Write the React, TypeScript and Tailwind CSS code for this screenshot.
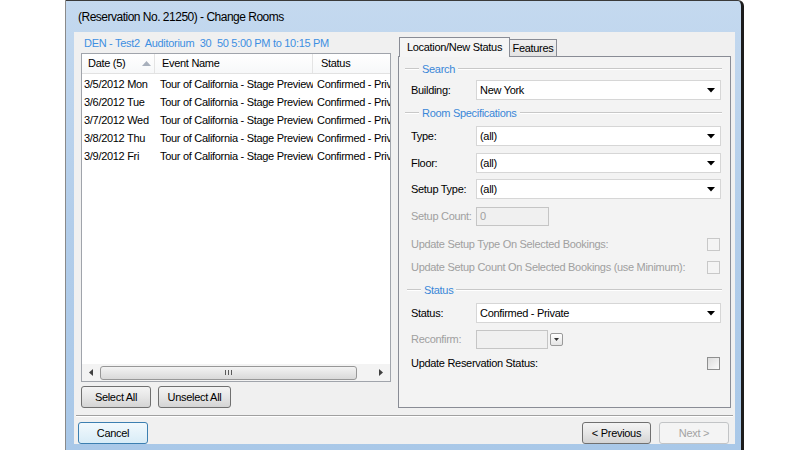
import React from 'react';

const rows = [
  ['3/5/2012 Mon', 'Tour of California - Stage Preview', 'Confirmed - Private'],
  ['3/6/2012 Tue', 'Tour of California - Stage Preview', 'Confirmed - Private'],
  ['3/7/2012 Wed', 'Tour of California - Stage Preview', 'Confirmed - Private'],
  ['3/8/2012 Thu', 'Tour of California - Stage Preview', 'Confirmed - Private'],
  ['3/9/2012 Fri', 'Tour of California - Stage Preview', 'Confirmed - Private'],
];

function Caret() {
  return (
    <svg width="8" height="5" viewBox="0 0 8 5">
      <polygon points="0,0 8,0 4,4.5" fill="#000" />
    </svg>
  );
}

function Combo({ value }: { value: string }) {
  return (
    <div className="flex h-[20px] w-[245px] items-center justify-between border border-[#d6d6d6] bg-white pl-[3px] pr-[5px]">
      <span>{value}</span>
      <Caret />
    </div>
  );
}

function GroupHeader({ title, indent = 14 }: { title: string; indent?: number }) {
  return (
    <div className="flex h-[14px] items-center gap-[3px] pr-[8px]">
      <div className="h-[2px] border-t border-b border-t-[#c8c8c8] border-b-white" style={{ width: indent }} />
      <span className="leading-[14px] text-[#3a87d8]">{title}</span>
      <div className="h-[2px] flex-1 border-t border-b border-t-[#c8c8c8] border-b-white" />
    </div>
  );
}

function Check({ disabled }: { disabled?: boolean }) {
  return (
    <div
      className={
        disabled
          ? 'h-[13px] w-[13px] border border-[#c8c8c8] bg-[#f4f4f4]'
          : 'h-[13px] w-[13px] border border-[#8e8f8f] bg-gradient-to-br from-[#dcdcdc] to-[#fbfbfb]'
      }
    />
  );
}

function WinButton({ label, w, variant = 'normal' }: { label: string; w: number; variant?: 'normal' | 'default' | 'disabled' }) {
  const cls =
    variant === 'default'
      ? 'border-[#3c7fb1] bg-gradient-to-b from-[#f2f9fd] to-[#d8ecf7] text-black'
      : variant === 'disabled'
        ? 'border-[#c2c4c6] bg-[#f4f4f4] text-[#a3a3a3]'
        : 'border-[#707070] bg-gradient-to-b from-[#f4f4f4] via-[#e6e6e6] to-[#d4d4d4] text-black';
  return (
    <div className={`flex h-[22px] items-center justify-center rounded-[3px] border ${cls}`} style={{ width: w }}>
      {label}
    </div>
  );
}

export default function App() {
  return (
    <div className="flex h-[450px] w-[812px] overflow-hidden bg-white font-['Liberation_Sans',Arial,sans-serif] text-[11px] tracking-[-0.3px] text-black">
      {/* Window frame */}
      <div className="ml-[65px] flex h-[452px] w-[679px] flex-col rounded-tr-[6px] border-t border-r-[3px] border-l border-t-[#3a3a3a] border-r-[#1c1c1c] border-l-[#8a8a8a] bg-gradient-to-b from-[#c4d9ef] via-[#b2cdea] to-[#a9c8e8] pr-[6px] pl-[8px]">
        {/* Title bar */}
        <div className="flex h-[31px] items-center pl-[4px] text-[12px] tracking-[-0.5px]">(Reservation No. 21250) - Change Rooms</div>

        {/* Content */}
        <div className="flex h-[412px] flex-col bg-[#f0f0f0]">
          <div className="flex h-[376px]">
            {/* Left column */}
            <div className="flex w-[310px] flex-col pl-[7px] box-content">
              <div className="mt-[3px] h-[16px] pl-[3px] leading-[16px] text-[#3d8fe2]">
                DEN - Test2&nbsp; Auditorium&nbsp; 30&nbsp; 50 5:00 PM to 10:15 PM
              </div>
              <div className="mt-[2px] flex h-[329px] flex-col border border-[#a0a4ab] bg-white">
                {/* Header */}
                <div className="flex h-[20px] items-center border-b border-[#e2e2e2] bg-gradient-to-b from-white to-[#f7f8f9]">
                  <div className="flex h-full w-[73px] items-center justify-between border-r border-[#e4e4e4] pl-[6px] pr-[3px]">
                    <span>Date (5)</span>
                    <svg width="9" height="5" viewBox="0 0 9 5">
                      <polygon points="0,5 9,5 4.5,0" fill="#a8b0bc" />
                    </svg>
                  </div>
                  <div className="flex h-full w-[158px] items-center border-r border-[#e4e4e4] pl-[7px]">Event Name</div>
                  <div className="flex h-full flex-1 items-center pl-[8px]">Status</div>
                </div>
                {/* Rows */}
                <div className="mt-[1px] flex flex-1 flex-col">
                  {rows.map((r) => (
                    <div key={r[0]} className="flex h-[18px] items-center whitespace-nowrap">
                      <div className="w-[73px] overflow-hidden pl-[2px]">{r[0]}</div>
                      <div className="w-[158px] overflow-hidden pl-[5px]">{r[1]}</div>
                      <div className="flex-1 overflow-hidden pl-[4px]">{r[2]}</div>
                    </div>
                  ))}
                </div>
                {/* Horizontal scrollbar */}
                <div className="flex h-[17px] items-center bg-[#f3f3f3]">
                  <div className="flex w-[17px] items-center justify-center">
                    <svg width="4" height="7" viewBox="0 0 4 7">
                      <polygon points="4,0 4,7 0,3.5" fill="#404040" />
                    </svg>
                  </div>
                  <div className="ml-[1px] flex h-[14px] w-[257px] items-center justify-center rounded-[3px] border border-[#979797] bg-gradient-to-b from-[#f3f3f3] to-[#d9d9d9]">
                    <svg width="7" height="5" viewBox="0 0 7 5">
                      <rect x="0" y="0" width="1" height="5" fill="#5a5a5a" />
                      <rect x="3" y="0" width="1" height="5" fill="#5a5a5a" />
                      <rect x="6" y="0" width="1" height="5" fill="#5a5a5a" />
                    </svg>
                  </div>
                  <div className="flex flex-1 items-center justify-end pr-[7px]">
                    <svg width="4" height="7" viewBox="0 0 4 7">
                      <polygon points="0,0 0,7 4,3.5" fill="#404040" />
                    </svg>
                  </div>
                </div>
              </div>
              <div className="mt-[4px] flex gap-[7px]">
                <WinButton label="Select All" w={70} />
                <WinButton label="Unselect All" w={73} />
              </div>
            </div>

            {/* Right column: tab control */}
            <div className="ml-[7px] flex w-[333px] flex-col">
              <div className="mt-[5px] flex h-[19px] items-end pl-[1px]">
                <div className="relative z-10 -mb-px flex h-[20px] w-[111px] items-center justify-center border border-b-0 border-[#898c95] bg-[#f5f5f5]">
                  Location/New Status
                </div>
                <div className="flex h-[17px] w-[47px] items-center justify-center border border-b-0 border-l-0 border-[#898c95] bg-gradient-to-b from-[#f0f0f0] to-[#e3e3e3]">
                  Features
                </div>
              </div>
              <div className="flex h-[352px] flex-col border border-[#898c95] bg-[#f3f3f3] pl-[6px]">
                <div className="mt-[5px]">
                  <GroupHeader title="Search" />
                </div>
                <div className="mt-[4px] flex items-center pl-[6px]">
                  <span className="w-[65px]">Building:</span>
                  <Combo value="New York" />
                </div>
                <div className="mt-[6px]">
                  <GroupHeader title="Room Specifications" />
                </div>
                <div className="mt-[6px] flex items-center pl-[6px]">
                  <span className="w-[65px]">Type:</span>
                  <Combo value="(all)" />
                </div>
                <div className="mt-[7px] flex items-center pl-[6px]">
                  <span className="w-[65px]">Floor:</span>
                  <Combo value="(all)" />
                </div>
                <div className="mt-[6px] flex items-center pl-[6px]">
                  <span className="w-[65px]">Setup Type:</span>
                  <Combo value="(all)" />
                </div>
                <div className="mt-[8px] flex items-center pl-[6px] text-[#a0a0a0]">
                  <span className="w-[65px]">Setup Count:</span>
                  <div className="flex h-[19px] w-[73px] items-center border border-[#c5c5c5] bg-[#f0f0f0] pl-[3px]">0</div>
                </div>
                <div className="mt-[11px] flex h-[14px] items-center justify-between pl-[6px] pr-[10px] text-[#a0a0a0]">
                  <span>Update Setup Type On Selected Bookings:</span>
                  <Check disabled />
                </div>
                <div className="mt-[9px] flex h-[14px] items-center justify-between pl-[6px] pr-[10px] text-[#a0a0a0]">
                  <span>Update Setup Count On Selected Bookings (use Minimum):</span>
                  <Check disabled />
                </div>
                <div className="mt-[9px] pl-[2px]">
                  <GroupHeader title="Status" indent={14} />
                </div>
                <div className="mt-[6px] flex items-center pl-[6px]">
                  <span className="w-[65px]">Status:</span>
                  <Combo value="Confirmed - Private" />
                </div>
                <div className="mt-[7px] flex items-center pl-[6px] text-[#a0a0a0]">
                  <span className="w-[65px]">Reconfirm:</span>
                  <div className="h-[19px] w-[72px] border border-[#c5c5c5] bg-[#f0f0f0]" />
                  <div className="ml-[2px] flex h-[13px] w-[13px] items-center justify-center rounded-[2px] border border-[#9a9a9a] bg-gradient-to-b from-white to-[#e4e4e4]">
                    <svg width="5" height="3" viewBox="0 0 5 3">
                      <polygon points="0,0 5,0 2.5,3" fill="#333" />
                    </svg>
                  </div>
                </div>
                <div className="mt-[7px] flex h-[14px] items-center justify-between pl-[6px] pr-[10px]">
                  <span>Update Reservation Status:</span>
                  <Check />
                </div>
              </div>
            </div>
          </div>

          {/* Separator */}
          <div className="mx-[2px] mt-[7px] h-[2px] border-t border-b border-t-[#a0a0a0] border-b-white" />

          {/* Bottom buttons */}
          <div className="mt-[5px] flex items-center justify-between pl-[4px] pr-[6px]">
            <WinButton label="Cancel" w={70} variant="default" />
            <div className="flex gap-[8px]">
              <WinButton label="< Previous" w={69} />
              <WinButton label="Next >" w={70} variant="disabled" />
            </div>
          </div>
        </div>
      </div>
    </div>
  );
}
